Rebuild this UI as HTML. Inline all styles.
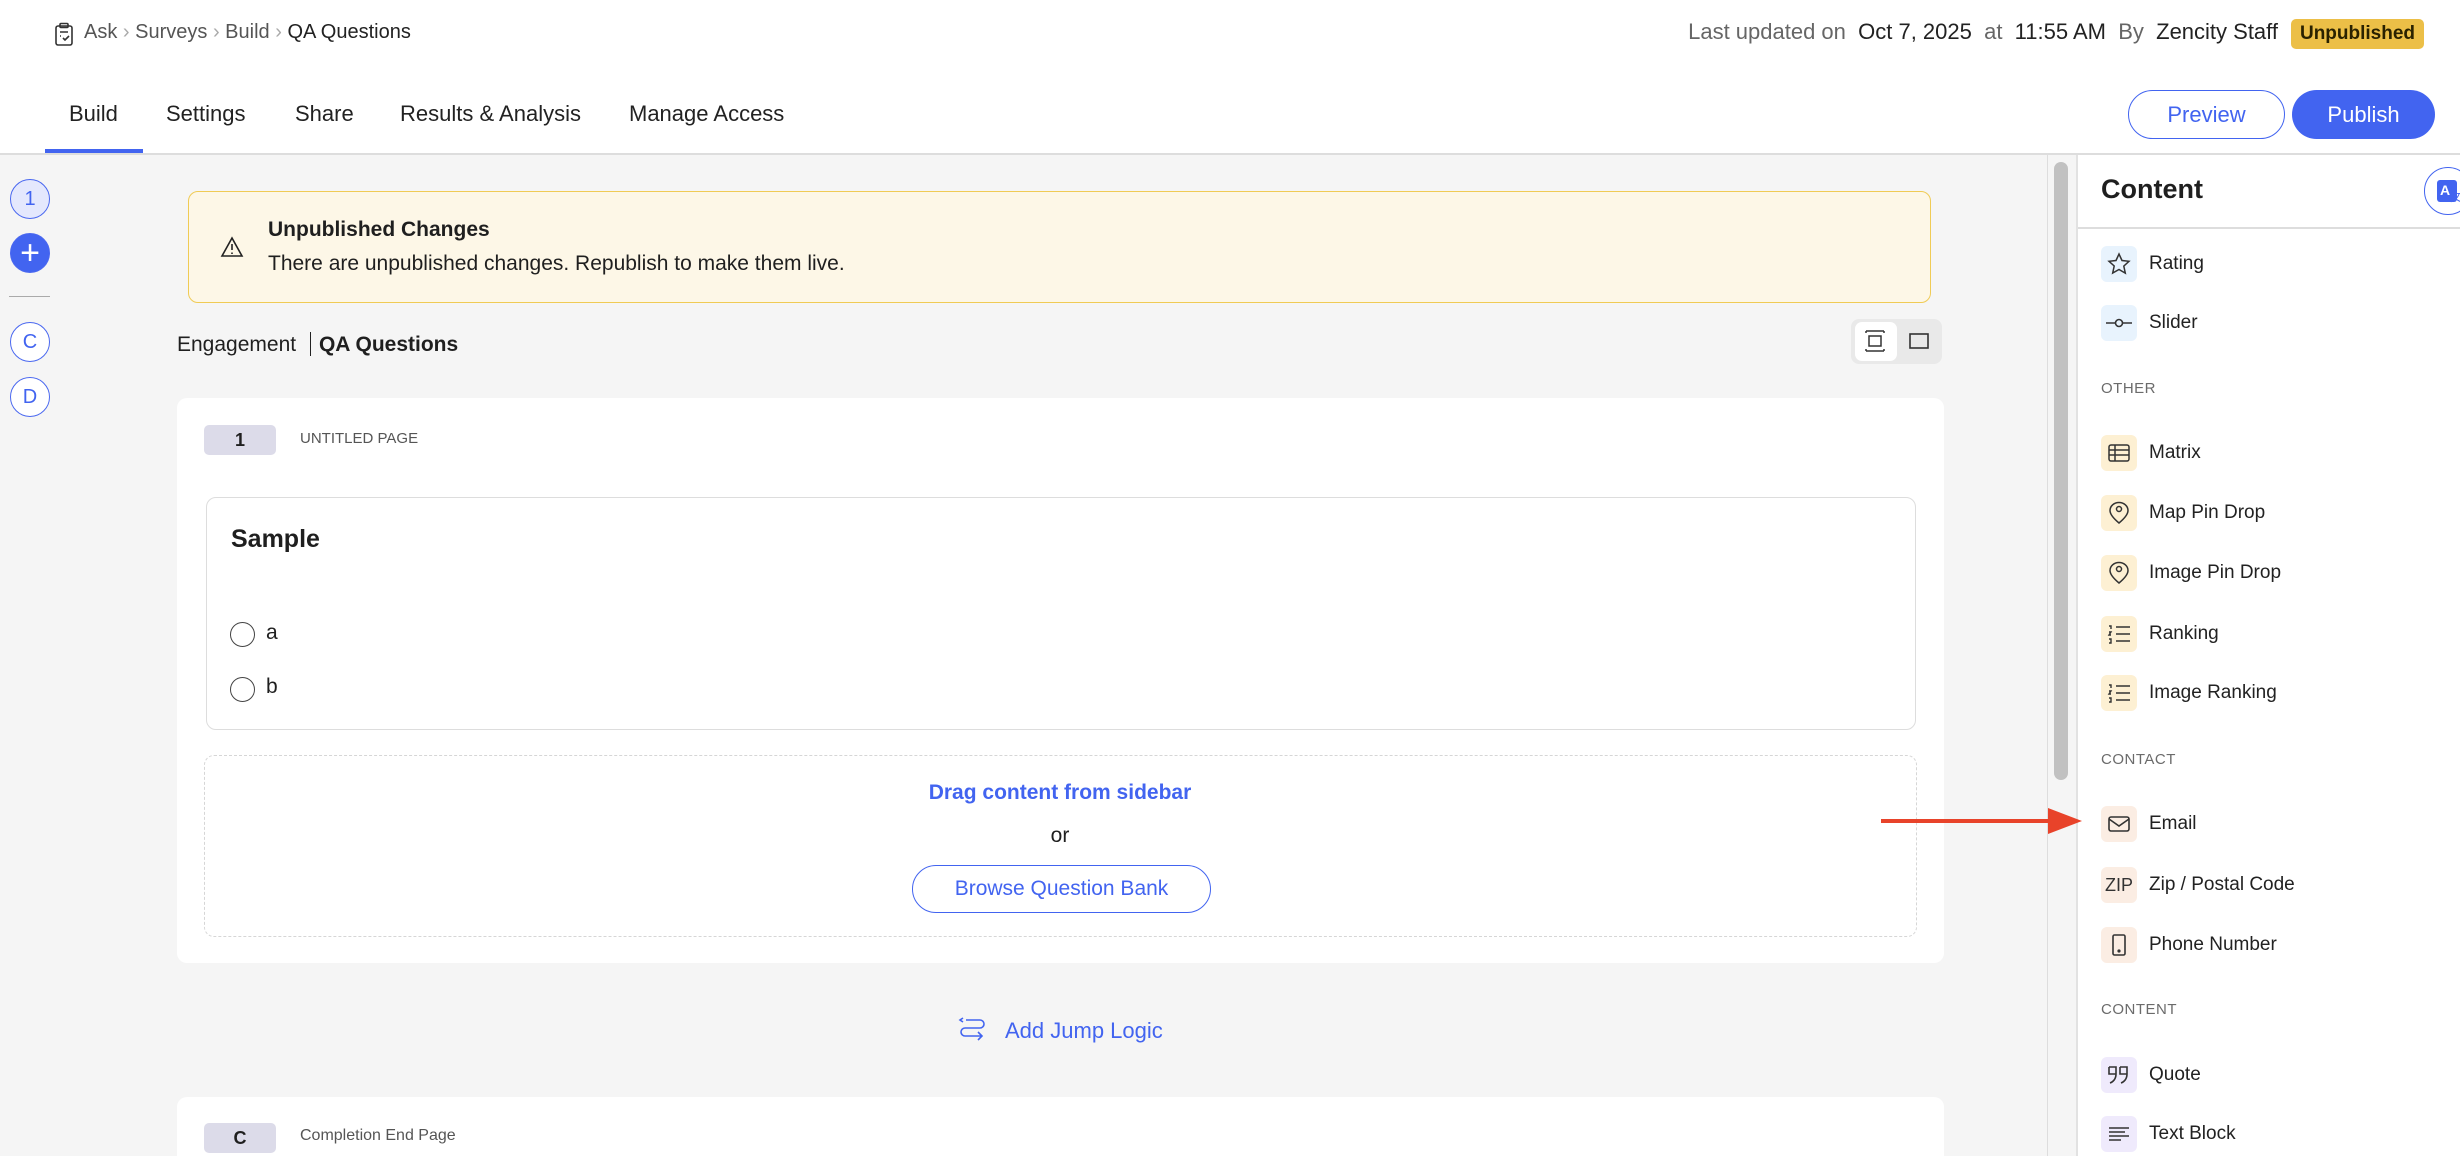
<!DOCTYPE html>
<html><head><meta charset="utf-8">
<style>
*{box-sizing:border-box;margin:0;padding:0}
body{width:2460px;height:1156px;overflow:hidden;background:#fff;font-family:"Liberation Sans",sans-serif;color:#1f1f1f;position:relative}
.a{position:absolute}
.tab{position:absolute;top:101px;font-size:22px;color:#222}
.circ{position:absolute;left:10px;width:40px;height:40px;border-radius:50%;border:1.5px solid #4a68f0;color:#4264f0;font-size:20px;display:flex;align-items:center;justify-content:center;background:#fff}
.item{position:absolute;left:2101px;height:36px;display:flex;align-items:center;font-size:19px;color:#222}
.ib{width:36px;height:36px;border-radius:6px;display:flex;align-items:center;justify-content:center;margin-right:12px}
.sec{position:absolute;left:2101px;font-size:15px;color:#6b6b6b;letter-spacing:.5px}
.blue{background:#e8f3fd}.yel{background:#fdf0d3}.pch{background:#fbede3}.lav{background:#efeafc}
</style></head><body>
<!-- header -->
<svg class="a" style="left:54px;top:22px" width="20" height="24" viewBox="0 0 20 24" fill="none" stroke="#333" stroke-width="1.6"><rect x="2" y="4" width="16" height="19" rx="2"/><rect x="6" y="1.5" width="8" height="4" rx="1"/><path d="M6 10h8M6 14h1M9 16l2 2 4-4"/></svg>
<div class="a" style="left:84px;top:21px;font-size:20px;color:#555">Ask <span style="color:#aaa">›</span> Surveys <span style="color:#aaa">›</span> Build <span style="color:#aaa">›</span> <span style="color:#222">QA Questions</span></div>
<div class="a" style="right:182px;top:19px;font-size:22px;color:#666;white-space:nowrap">Last updated on&nbsp; <span style="color:#222">Oct 7, 2025</span>&nbsp; at&nbsp; <span style="color:#222">11:55 AM</span>&nbsp; By&nbsp; <span style="color:#222">Zencity Staff</span></div>
<div class="a" style="left:2291px;top:19px;width:133px;height:30px;background:#ecbf47;border-radius:5px;font-size:19px;font-weight:bold;color:#2a2200;display:flex;align-items:center;justify-content:center">Unpublished</div>
<div class="tab" style="left:69px">Build</div>
<div class="tab" style="left:166px">Settings</div>
<div class="tab" style="left:295px">Share</div>
<div class="tab" style="left:400px">Results &amp; Analysis</div>
<div class="tab" style="left:629px">Manage Access</div>
<div class="a" style="left:45px;top:149px;width:98px;height:4px;background:#4264f0"></div>
<div class="a" style="left:2128px;top:90px;width:157px;height:49px;border:1.5px solid #4264f0;border-radius:25px;color:#4264f0;font-size:22px;display:flex;align-items:center;justify-content:center">Preview</div>
<div class="a" style="left:2292px;top:90px;width:143px;height:49px;background:#4264f0;border-radius:25px;color:#fff;font-size:22px;display:flex;align-items:center;justify-content:center">Publish</div>
<div class="a" style="left:0;top:153px;width:2460px;height:2px;background:#ddd"></div>
<!-- main bg -->
<div class="a" style="left:0;top:155px;width:2076px;height:1001px;background:#f5f5f5"></div>
<div class="a" style="left:2047px;top:155px;width:1px;height:1001px;background:#ddd"></div>
<div class="a" style="left:2054px;top:162px;width:14px;height:618px;background:#c1c1c1;border-radius:7px"></div>
<div class="a" style="left:2076px;top:155px;width:2px;height:1001px;background:#e2e2e2"></div>
<!-- left rail -->
<div class="circ" style="top:179px;background:#e4e8fd">1</div>
<div class="circ" style="top:233px;background:#4264f0;color:#fff;font-size:34px;font-weight:300">+</div>
<div class="a" style="left:9px;top:296px;width:41px;height:1px;background:#aaa"></div>
<div class="circ" style="top:322px">C</div>
<div class="circ" style="top:377px">D</div>
<!-- warning -->
<div class="a" style="left:188px;top:191px;width:1743px;height:112px;background:#fdf7e7;border:1.5px solid #f0cb55;border-radius:10px"></div>
<svg class="a" style="left:220px;top:236px" width="24" height="22" viewBox="0 0 24 22" fill="none" stroke="#222" stroke-width="1.6"><path d="M12 2L22 20H2Z"/><path d="M12 8v6M12 16.5v1.5"/></svg>
<div class="a" style="left:268px;top:218px;font-size:21px;font-weight:bold">Unpublished Changes</div>
<div class="a" style="left:268px;top:252px;font-size:21px">There are unpublished changes. Republish to make them live.</div>
<div class="a" style="left:177px;top:332px;font-size:21px">Engagement <span style="display:inline-block;width:1px;height:24px;background:#222;vertical-align:-5px;margin:0 8px"></span><b>QA Questions</b></div>
<div class="a" style="left:1851px;top:319px;width:91px;height:45px;background:#e9e9e9;border-radius:8px"></div>
<div class="a" style="left:1855px;top:322px;width:42px;height:39px;background:#fff;border-radius:7px"></div>
<svg class="a" style="left:1863px;top:329px" width="24" height="24" viewBox="0 0 24 24" fill="none" stroke="#333" stroke-width="1.5"><path d="M3 2h18M3 2v2M21 2v2M3 22h18M3 22v-2M21 22v-2"/><rect x="6" y="7" width="12" height="10"/></svg>
<svg class="a" style="left:1909px;top:333px" width="20" height="16" viewBox="0 0 20 16" fill="none" stroke="#333" stroke-width="1.6"><rect x="1" y="1" width="18" height="14"/></svg>
<!-- card1 -->
<div class="a" style="left:177px;top:398px;width:1767px;height:565px;background:#fff;border-radius:10px"></div>
<div class="a" style="left:204px;top:425px;width:72px;height:30px;background:#dcdbe9;border-radius:5px;font-size:18px;font-weight:bold;display:flex;align-items:center;justify-content:center">1</div>
<div class="a" style="left:300px;top:430px;font-size:15px;color:#555">UNTITLED PAGE</div>
<div class="a" style="left:206px;top:497px;width:1710px;height:233px;border:1.5px solid #ddd;border-radius:10px"></div>
<div class="a" style="left:231px;top:525px;font-size:25px;font-weight:bold">Sample</div>
<div class="a" style="left:230px;top:622px;width:25px;height:25px;border:1.5px solid #444;border-radius:50%"></div>
<div class="a" style="left:266px;top:621px;font-size:21px">a</div>
<div class="a" style="left:230px;top:677px;width:25px;height:25px;border:1.5px solid #444;border-radius:50%"></div>
<div class="a" style="left:266px;top:675px;font-size:21px">b</div>
<div class="a" style="left:204px;top:755px;width:1713px;height:182px;border:1.5px dashed #d6d6d6;border-radius:10px"></div>
<div class="a" style="left:760px;top:781px;width:600px;text-align:center;font-size:21px;font-weight:bold;color:#4264f0">Drag content from sidebar</div>
<div class="a" style="left:760px;top:824px;width:600px;text-align:center;font-size:21px">or</div>
<div class="a" style="left:912px;top:865px;width:299px;height:48px;border:1.5px solid #4264f0;border-radius:24px;color:#4264f0;font-size:21px;display:flex;align-items:center;justify-content:center">Browse Question Bank</div>
<svg class="a" style="left:958px;top:1017px" width="28" height="28" viewBox="0 0 28 28" fill="none" stroke="#4264f0" stroke-width="1.6"><path d="M8 3h14a4 4 0 0 1 0 8H7a4 4 0 0 0 0 8h17M20 15l4 4-4 4M5 1l-3 2 3 2"/></svg>
<div class="a" style="left:1005px;top:1018px;font-size:22px;color:#4264f0">Add Jump Logic</div>
<!-- card2 -->
<div class="a" style="left:177px;top:1097px;width:1767px;height:70px;background:#fff;border-radius:10px"></div>
<div class="a" style="left:204px;top:1123px;width:72px;height:30px;background:#dcdbe9;border-radius:5px;font-size:18px;font-weight:bold;display:flex;align-items:center;justify-content:center">C</div>
<div class="a" style="left:300px;top:1127px;font-size:16px;color:#555">Completion End Page</div>
<!-- arrow -->
<div class="a" style="left:1881px;top:819px;width:170px;height:4px;background:#e8432a"></div>
<svg class="a" style="left:2048px;top:808px" width="34" height="26" viewBox="0 0 34 26"><path d="M0 0L34 13L0 26Z" fill="#e8432a"/></svg>
<!-- sidebar -->
<div class="a" style="left:2101px;top:174px;font-size:27px;font-weight:bold">Content</div>
<div class="a" style="left:2424px;top:167px;width:48px;height:48px;border:1.5px solid #4264f0;border-radius:50%"></div>
<div class="a" style="left:2437px;top:180px;width:20px;height:22px;background:#4264f0;border-radius:3px;color:#fff;font-size:14px;font-weight:bold;padding:2px 0 0 3px">A</div>
<div class="a" style="left:2450px;top:188px;font-size:12px;color:#4264f0">文</div>
<div class="a" style="left:2078px;top:227px;width:382px;height:2px;background:#ddd"></div>

<div class="item" style="top:246px"><div class="ib blue"><svg width="24" height="24" viewBox="0 0 24 24" fill="none" stroke="#333" stroke-width="1.5"><path d="M12 2l3 6.5 7 .8-5.2 4.8 1.5 7L12 17.5 5.7 21l1.5-7L2 9.3l7-.8z"/></svg></div>Rating</div>
<div class="item" style="top:305px"><div class="ib blue"><svg width="26" height="12" viewBox="0 0 26 12" fill="none" stroke="#333" stroke-width="1.6"><path d="M0 6h9M17 6h9"/><circle cx="13" cy="6" r="3.5"/></svg></div>Slider</div>
<div class="sec" style="top:380px">OTHER</div>
<div class="item" style="top:435px"><div class="ib yel"><svg width="22" height="18" viewBox="0 0 22 18" fill="none" stroke="#333" stroke-width="1.5"><rect x="1" y="1" width="20" height="16" rx="2"/><path d="M1 6h20M1 11h20M7 1v16"/></svg></div>Matrix</div>
<div class="item" style="top:495px"><div class="ib yel"><svg width="22" height="24" viewBox="0 0 22 24" fill="none" stroke="#333" stroke-width="1.5"><path d="M11 22C5 17 2 13 2 9.5a9 8 0 0 1 18 0C20 13 17 17 11 22Z"/><circle cx="11" cy="8" r="2.5"/></svg></div>Map Pin Drop</div>
<div class="item" style="top:555px"><div class="ib yel"><svg width="22" height="24" viewBox="0 0 22 24" fill="none" stroke="#333" stroke-width="1.5"><path d="M11 22C5 17 2 13 2 9.5a9 8 0 0 1 18 0C20 13 17 17 11 22Z"/><circle cx="11" cy="8" r="2.5"/></svg></div>Image Pin Drop</div>
<div class="item" style="top:616px"><div class="ib yel"><svg width="24" height="20" viewBox="0 0 24 20" fill="none" stroke="#333" stroke-width="1.4"><path d="M9 3h14M9 10h14M9 17h14M2 2h2v3M2 8h2l-2 3h2M2 15h2v4H2"/></svg></div>Ranking</div>
<div class="item" style="top:675px"><div class="ib yel"><svg width="24" height="20" viewBox="0 0 24 20" fill="none" stroke="#333" stroke-width="1.4"><path d="M9 3h14M9 10h14M9 17h14M2 2h2v3M2 8h2l-2 3h2M2 15h2v4H2"/></svg></div>Image Ranking</div>
<div class="sec" style="top:751px">CONTACT</div>
<div class="item" style="top:806px"><div class="ib pch"><svg width="22" height="16" viewBox="0 0 22 16" fill="none" stroke="#333" stroke-width="1.6"><rect x="1" y="1" width="20" height="14" rx="2"/><path d="M1 3l10 7 10-7"/></svg></div>Email</div>
<div class="item" style="top:867px"><div class="ib pch" style="font-size:18px;color:#333">ZIP</div>Zip / Postal Code</div>
<div class="item" style="top:927px"><div class="ib pch"><svg width="14" height="22" viewBox="0 0 14 22" fill="none" stroke="#333" stroke-width="1.6"><rect x="1" y="1" width="12" height="20" rx="1.5"/><circle cx="7" cy="17" r=".8" fill="#333"/></svg></div>Phone Number</div>
<div class="sec" style="top:1001px">CONTENT</div>
<div class="item" style="top:1057px"><div class="ib lav"><svg width="24" height="20" viewBox="0 0 24 20" fill="none" stroke="#333" stroke-width="1.6"><path d="M2 2h7v7c0 5-3 8-6 9M13 2h7v7c0 5-3 8-6 9M2 2v7h7M13 2v7h7"/></svg></div>Quote</div>
<div class="item" style="top:1116px"><div class="ib lav"><svg width="22" height="16" viewBox="0 0 22 16" fill="none" stroke="#333" stroke-width="1.5"><path d="M1 2h20M1 6h16M1 10h20M1 14h12"/></svg></div>Text Block</div>
</body></html>
